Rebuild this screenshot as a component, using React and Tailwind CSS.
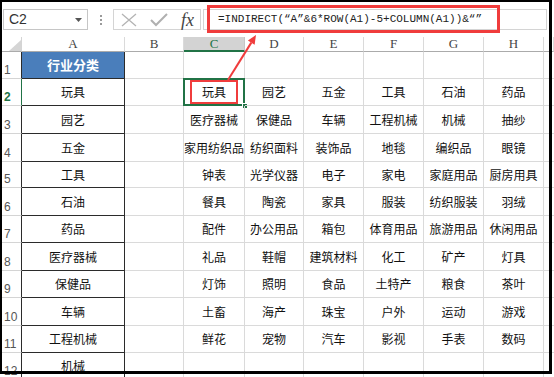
import React from "react";

const COLS = ["A", "B", "C", "D", "E", "F", "G", "H", ""];
const ROW_H = [27, 27, 28, 28, 26, 28, 27, 28, 27, 28, 27, 27];
const COL_A = ["行业分类", "玩具", "园艺", "五金", "工具", "石油", "药品", "医疗器械", "保健品", "车辆", "工程机械", "机械"];
const DATA = [
  [],
  ["玩具", "园艺", "五金", "工具", "石油", "药品"],
  ["医疗器械", "保健品", "车辆", "工程机械", "机械", "抽纱"],
  ["家用纺织品", "纺织面料", "装饰品", "地毯", "编织品", "眼镜"],
  ["钟表", "光学仪器", "电子", "家电", "家庭用品", "厨房用具"],
  ["餐具", "陶瓷", "家具", "服装", "纺织服装", "羽绒"],
  ["配件", "办公用品", "箱包", "体育用品", "旅游用品", "休闲用品"],
  ["礼品", "鞋帽", "建筑材料", "化工", "矿产", "灯具"],
  ["灯饰", "照明", "食品", "土特产", "粮食", "茶叶"],
  ["土畜", "海产", "珠宝", "户外", "运动", "游戏"],
  ["鲜花", "宠物", "汽车", "影视", "手表", "数码"],
  [],
];

const cjk = { fontFamily: '"Noto Sans CJK SC", "Noto Sans", sans-serif' };

function Grid() {
  const cells = [];
  cells.push(
    <div key="corner" className="relative border-r border-b border-r-[#d4d4d4] border-b-[#ababab] bg-white">
      <svg className="absolute left-[9px] top-[3px]" width="12" height="11" viewBox="0 0 12 11">
        <polygon points="12,0 12,11 0,11" fill="#d5d5d5" />
      </svg>
    </div>
  );
  COLS.forEach((c, i) => {
    const sel = c === "C";
    cells.push(
      <div
        key={"h" + i}
        className={
          sel
            ? "flex items-center justify-center border-r border-r-[#c6c6c6] border-b-2 border-b-[#217346] bg-[#d3d3d3] text-[#217346] text-[13px]"
            : "flex items-center justify-center border-r border-r-[#dadada] border-b border-b-[#ababab] bg-white text-[#444] text-[13px]"
        }
        style={{ fontFamily: '"Liberation Serif", serif' }}
      >
        {c}
      </div>
    );
  });
  ROW_H.forEach((h, r) => {
    const rowNum = r + 1;
    const selRow = rowNum === 2;
    cells.push(
      <div
        key={"rh" + r}
        className={
          "flex items-end pl-[4px] pb-[1px] border-b border-b-[#d4d4d4] border-r text-[12px] leading-[14px] bg-white " +
          (selRow ? "border-r-[#217346] text-[#217346] font-bold" : "border-r-[#2b2b2b] text-[#555]")
        }
        style={{ fontFamily: '"Liberation Sans", sans-serif' }}
      >
        {rowNum}
      </div>
    );
    cells.push(
      <div
        key={"a" + r}
        className={
          "flex items-center justify-center border-r border-b border-r-[#2b2b2b] border-b-[#2b2b2b] " +
          (r === 0 ? "bg-[#4a7ebb] text-white font-bold text-[13px]" : "bg-white text-[#111] text-[12px]")
        }
        style={cjk}
      >
        {COL_A[r]}
      </div>
    );
    cells.push(<div key={"b" + r} className="border-r border-b border-[#dadada]" />);
    for (let c = 0; c < 6; c++) {
      const txt = DATA[r][c] || "";
      const isC2 = r === 1 && c === 0;
      cells.push(
        <div
          key={"c" + r + "-" + c}
          className="relative flex items-center justify-center border-r border-b border-[#dadada] text-[12px] text-[#111] whitespace-nowrap"
          style={cjk}
        >
          {txt}
          {isC2 && (
            <>
              <div className="absolute left-[-1px] top-[-1px] right-[-1px] bottom-[-1px] border-2 border-[#217346]" />
              <div className="absolute right-[-4px] bottom-[-4px] w-[6px] h-[6px] bg-[#217346] border border-white" />
              <div className="absolute left-[6px] top-[1px] w-[48px] h-[24px] border-2 border-[#f03c3c]" />
            </>
          )}
        </div>
      );
    }
    cells.push(<div key={"i" + r} className="border-b border-[#dadada]" />);
  });

  return (
    <div
      className="grid grid-cols-[22px_103px_59px_61px_59px_60px_60px_60px_60px_1fr]"
      style={{ gridTemplateRows: "15px " + ROW_H.map((h) => h + "px").join(" ") }}
    >
      {cells}
    </div>
  );
}

function FormulaBar() {
  return (
    <div className="h-[37px] flex items-start pt-[9px] pl-[3px] pr-[7px] bg-white">
      <div
        className="w-[85px] h-[21px] border border-[#c6c6c6] flex items-center justify-between pl-[5px] pr-[5px] text-[14px] text-[#333]"
        style={{ fontFamily: '"Liberation Sans", sans-serif' }}
      >
        <span>C2</span>
        <svg width="7" height="4" viewBox="0 0 7 4">
          <polygon points="0,0 7,0 3.5,4" fill="#555" />
        </svg>
      </div>
      <div className="w-[25px] h-[21px] flex flex-col items-center justify-center gap-[2px]">
        <div className="w-[2px] h-[2px] bg-[#9a9a9a]" />
        <div className="w-[2px] h-[2px] bg-[#9a9a9a]" />
        <div className="w-[2px] h-[2px] bg-[#9a9a9a]" />
      </div>
      <div className="w-[88px] h-[21px] border border-[#d4d4d4] flex items-center pl-[7px]">
        <svg width="16" height="14" viewBox="0 0 16 14">
          <path d="M1 1 L15 13 M15 1 L1 13" stroke="#b4b4b4" strokeWidth="1.3" fill="none" />
        </svg>
        <svg className="ml-[13px]" width="18" height="14" viewBox="0 0 18 14">
          <path d="M1 7 L6 12 L17 1" stroke="#b0b0b0" strokeWidth="2" fill="none" />
        </svg>
        <span
          className="ml-[13px] text-[18px] leading-[18px] italic text-[#444]"
          style={{ fontFamily: '"Liberation Serif", serif' }}
        >
          fx
        </span>
      </div>
      <div
        className="ml-[2px] flex-1 h-[21px] border border-[#d4d4d4] flex items-center pl-[14px] text-[11px] text-[#222] whitespace-nowrap"
        style={{ fontFamily: '"Liberation Mono", monospace' }}
      >
        =INDIRECT(“A”&amp;6*ROW(A1)-5+COLUMN(A1))&amp;“”
      </div>
    </div>
  );
}

export default function App() {
  return (
    <div className="relative w-[554px] h-[377px] overflow-hidden bg-white">
      <FormulaBar />
      <Grid />
      <div className="absolute left-[207px] top-[5px] w-[293px] h-[28px] border-[3px] border-[#f03c3c]" />
      <svg className="absolute left-0 top-0 pointer-events-none" width="554" height="377">
        <line x1="228" y1="80" x2="251.3" y2="42.6" stroke="#f03c3c" strokeWidth="2" />
        <polygon points="256,35 254.6,44.8 247.9,40.5" fill="#f03c3c" />
      </svg>
      <div className="absolute left-0 top-0 w-[552px] h-[374px] border-l-2 border-t-2 border-r-[3px] border-b-[3px] border-black pointer-events-none" />
    </div>
  );
}
